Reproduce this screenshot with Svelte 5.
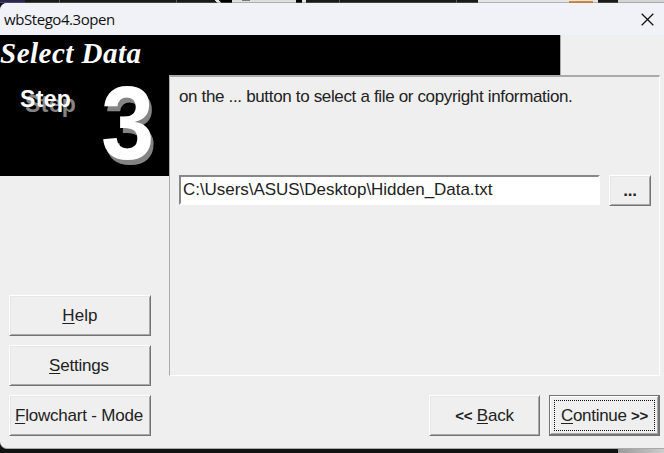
<script>
  let path = $state('C:\\Users\\ASUS\\Desktop\\Hidden_Data.txt');
  const tools = [
    { key: 'H', rest: 'elp', cls: 'help' },
    { key: 'S', rest: 'ettings', cls: 'settings' },
    { key: 'F', rest: 'lowchart - Mode', cls: 'flow' }
  ];
</script>

<div class="screen">
  <svg class="strip" width="664" height="3" viewBox="0 0 664 3" shape-rendering="crispEdges">
    <rect width="664" height="3" fill="#191918" />
    <rect width="25" height="3" fill="#2d2353" />
    <path d="M59 0h1v3h-1zM176 0h1v3h-1zM339 0h1v3h-1zM456 0h1v3h-1z" fill="#555" />
    <path d="M214 0h5l2 3h-4zM302 0h4v3h-4z" fill="#e6e6e6" />
    <rect x="221" width="11" height="3" fill="#000" />
    <rect x="232" width="64" height="3" fill="#dededc" />
    <rect x="242" width="8" height="1" fill="#777" />
    <rect x="296" width="6" height="3" fill="#000" />
    <rect x="478" width="120" height="3" fill="#e4e4e4" />
    <rect x="618" width="46" height="3" fill="#d4d4d4" />
    <rect y="2" width="664" height="1" fill="#777" opacity=".45" />
    <rect x="569" y="1" width="24" height="1" fill="#d28a3a" />
    <rect x="569" y="2" width="24" height="1" fill="#b98243" />
  </svg>

  <div class="window">
    <header class="titlebar">
      <span class="title">wbStego4.3open</span>
      <svg class="close" width="13" height="13" viewBox="0 0 13 13">
        <path d="M.7.7 12.3 12.3M12.3.7.7 12.3" stroke="#111" stroke-width="1.25" fill="none" />
      </svg>
    </header>
    <div class="banner"><h1>Select Data</h1></div>

    <div class="body">
      <aside>
        <div class="stepbox">
          <span class="step">Step</span>
          <span class="number">3</span>
        </div>
        <div class="tools">
          {#each tools as t}
            <button class="btn"><span class={t.cls}><u>{t.key}</u>{t.rest}</span></button>
          {/each}
        </div>
      </aside>

      <main>
        <section class="panel">
          <p>on the ... button to select a file or copyright information.</p>
          <div class="row">
            <div class="field"><span>{path}</span></div>
            <button class="btn browse"><span>...</span></button>
          </div>
        </section>
        <nav>
          <button class="btn back"><span><b>&lt;&lt;</b> <u>B</u>ack</span></button>
          <button class="btn next"><span><u>C</u>ontinue <b>&gt;&gt;</b></span></button>
        </nav>
      </main>
    </div>
  </div>
</div>

<style>
  :global(body) { margin: 0; }
  .screen {
    width: 664px;
    height: 453px;
    overflow: hidden;
    background: linear-gradient(90deg, #111313 0 618px, #999 618px, #ccc 664px);
    font-family: "Liberation Sans", Arial, sans-serif;
    font-size: 17px;
    color: #222;
  }
  .strip { display: block; }
  .window {
    height: 446px;
    box-sizing: border-box;
    background: #efefef;
    border-radius: 7px 0 0 7px;
    overflow: hidden;
    border-bottom: 1px solid #aaa;
  }
  .titlebar {
    height: 32px;
    background: #f0f2f8;
    display: flex;
    justify-content: space-between;
    align-items: center;
    padding: 0 10px 0 4px;
    box-sizing: border-box;
  }
  .title {
    font: 15px/31px "Open Sans", "Noto Sans", sans-serif;
    letter-spacing: -0.43px;
    color: #111;
    white-space: nowrap;
  }
  .banner {
    width: 560px;
    height: 40px;
    background: #000;
    border-right: 1px solid #aaa;
  }
  h1 {
    margin: 0;
    font: italic bold 29px/36px "Liberation Serif", "Times New Roman", serif;
    letter-spacing: 0.5px;
    color: #fff;
    white-space: nowrap;
  }
  .body { display: flex; height: 374px; }
  aside { width: 169px; flex: none; }
  .stepbox {
    height: 101px;
    background: #000;
    color: #fff;
    display: flex;
    align-items: flex-start;
    font-weight: bold;
    padding-left: 20px;
    box-sizing: border-box;
  }
  .step {
    font-size: 23px;
    line-height: 26px;
    margin-top: 11px;
    width: 81px;
    letter-spacing: 0.35px;
    text-shadow: 5px 5px 0 #848484;
  }
  .number {
    font-size: 103px;
    line-height: 98px;
    transform: scaleX(0.93);
    transform-origin: left;
    text-shadow: 3px 5px 0 #848484;
  }
  .tools {
    display: flex;
    flex-direction: column;
    gap: 9px;
    padding: 119px 18px 0 9px;
  }
  .btn {
    display: flex;
    align-items: center;
    justify-content: center;
    box-sizing: border-box;
    height: 41px;
    margin: 0;
    padding: 1px 0 0;
    font: inherit;
    letter-spacing: -0.2px;
    color: #222;
    white-space: pre;
    background: #efefef;
    border: 1px solid;
    border-color: #fff #747474 #747474 #fff;
    border-radius: 0;
    box-shadow: inset 1px 1px #e6e6e6, inset -1px -1px #a8a8a8;
  }
  .help { letter-spacing: 0.1px; }
  .settings, .flow { margin-left: -2px; }
  b { font-size: 15px; }
  u { text-underline-offset: 2px; text-decoration-thickness: 1px; }
  main { flex: 1; padding-right: 4px; }
  .panel {
    height: 301px;
    box-sizing: border-box;
    border: 1px solid;
    border-width: 2px 1px 1px 1px;
    border-color: #aaa #fff #fff #aaa;
    padding: 9px 8px 0 9px;
  }
  p {
    margin: 0;
    height: 89px;
    line-height: 21px;
    white-space: nowrap;
    letter-spacing: -0.34px;
  }
  .row { display: flex; gap: 9px; }
  .field {
    flex: 1;
    height: 30px;
    box-sizing: border-box;
    background: #fff;
    border: 2px solid;
    border-color: #888 #fff #fff #888;
    padding-left: 2px;
    line-height: 25px;
    letter-spacing: -0.04px;
    white-space: nowrap;
  }
  .browse {
    width: 42px;
    height: 31px;
    font-weight: bold;
  }
  nav {
    display: flex;
    justify-content: flex-end;
    gap: 9px;
    padding-top: 19px;
  }
  .back { width: 111px; }
  .next {
    width: 111px;
    border-color: #747474;
    border-width: 1px 2px 2px 1px;
    box-shadow: inset 1px 1px #fff, inset -1px -1px #a8a8a8;
    padding: 4px 3px 3px 4px;
    letter-spacing: -0.3px;
  }
  .next span {
    flex: 1;
    height: 31px;
    box-sizing: border-box;
    line-height: 30px;
    border: 1px dotted #111;
    text-align: center;
  }
</style>
